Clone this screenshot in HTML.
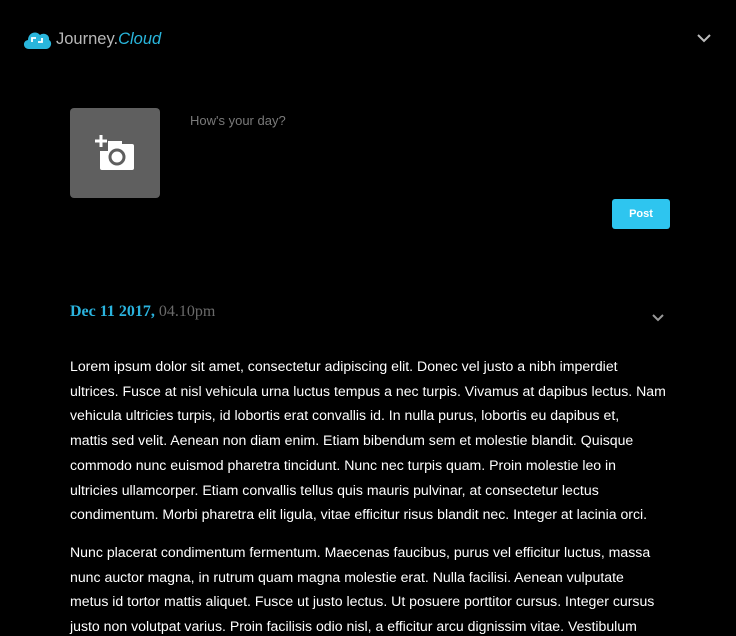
<!DOCTYPE html>
<html><head><meta charset="utf-8"><style>
*{margin:0;padding:0;box-sizing:border-box}
html,body{width:736px;height:636px;overflow:hidden}
body{background:#000;position:relative;font-family:"Liberation Sans",sans-serif}
.logo{position:absolute;left:22px;top:28px;display:flex;align-items:center}
.logo span{font-size:16.5px;color:#b8b8b8;margin-left:4px}
.logo i{color:#29b6dc;font-style:italic}
.photo{position:absolute;left:70px;top:108px;width:90px;height:90px;background:#5f5f5f;border-radius:4px}
.ph{position:absolute;left:190px;top:113px;font-size:13px;color:#7a7a7a}
.post{position:absolute;left:612px;top:199px;width:58px;height:30px;background:#2ec5ef;border-radius:3px;color:#fff;font-weight:bold;font-size:11px;text-align:center;line-height:30px}
.date{position:absolute;left:70px;top:303px;font-family:"Liberation Serif",serif;font-size:16px;font-weight:bold;color:#2ab3de}
.date span{color:#6a6a6a;font-weight:normal}
.txt{position:absolute;left:70px;top:354px;width:680px;color:#fff;font-size:14.1px;line-height:24.7px;white-space:nowrap}
.txt p{margin-bottom:13px}
</style></head><body>
<div class="logo"><svg width="30" height="22" viewBox="0 0 30 22"><path d="M7 21 C1 21 0 13 6 12 C6 5 14 2 18 7 C22 4 28 7 27 12 C31 14 29 21 24 21 Z" fill="#29b6dc"/><path d="M10 14V10h4M20 10v4h-4" stroke="#fff" stroke-width="1.8" fill="none"/></svg><span>Journey.<i>Cloud</i></span></div>
<svg style="position:absolute;left:697px;top:34px" width="14" height="9" viewBox="0 0 14 9"><path d="M1 1l6 6 6-6" stroke="#bbb" stroke-width="2" fill="none"/></svg>
<div class="photo"><svg style="position:absolute;left:24px;top:24px" width="42" height="42" viewBox="0 0 42 42"><rect x="6" y="12" width="34" height="26" rx="2" fill="#fff"/><rect x="0" y="7" width="14" height="12" fill="#5f5f5f"/><path d="M7 3v12M1 9h12" stroke="#fff" stroke-width="3"/><circle cx="23" cy="25" r="7" fill="none" stroke="#5f5f5f" stroke-width="3"/><rect x="14" y="9" width="14" height="5" fill="#fff"/></svg></div>
<div class="ph">How's your day?</div>
<div class="post">Post</div>
<div class="date">Dec 11 2017, <span>04.10pm</span></div>
<svg style="position:absolute;left:652px;top:314px" width="12" height="8" viewBox="0 0 12 8"><path d="M1 1l5 5 5-5" stroke="#999" stroke-width="2" fill="none"/></svg>
<div class="txt"><p>Lorem ipsum dolor sit amet, consectetur adipiscing elit. Donec vel justo a nibh imperdiet<br>ultrices. Fusce at nisl vehicula urna luctus tempus a nec turpis. Vivamus at dapibus lectus. Nam<br>vehicula ultricies turpis, id lobortis erat convallis id. In nulla purus, lobortis eu dapibus et,<br>mattis sed velit. Aenean non diam enim. Etiam bibendum sem et molestie blandit. Quisque<br>commodo nunc euismod pharetra tincidunt. Nunc nec turpis quam. Proin molestie leo in<br>ultricies ullamcorper. Etiam convallis tellus quis mauris pulvinar, at consectetur lectus<br>condimentum. Morbi pharetra elit ligula, vitae efficitur risus blandit nec. Integer at lacinia orci.</p><p>Nunc placerat condimentum fermentum. Maecenas faucibus, purus vel efficitur luctus, massa<br>nunc auctor magna, in rutrum quam magna molestie erat. Nulla facilisi. Aenean vulputate<br>metus id tortor mattis aliquet. Fusce ut justo lectus. Ut posuere porttitor cursus. Integer cursus<br>justo non volutpat varius. Proin facilisis odio nisl, a efficitur arcu dignissim vitae. Vestibulum</p></div>
</body></html>
